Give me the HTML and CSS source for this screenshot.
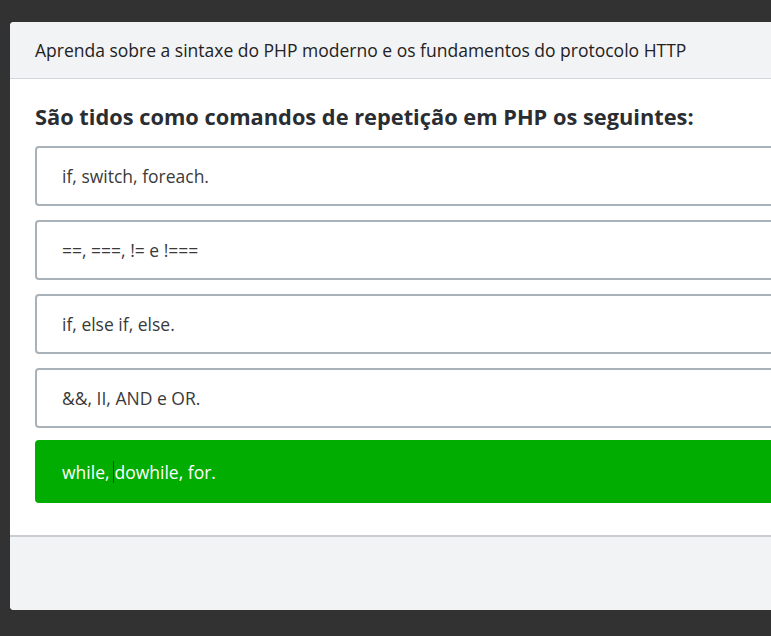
FILE: index.html
```html
<!DOCTYPE html>
<html lang="pt">
<head>
<meta charset="utf-8">
<link rel="stylesheet" href="styles.css">
</head>
<body>
<div class="card">
  <div class="card-header">Aprenda sobre a sintaxe do PHP moderno e os fundamentos do protocolo HTTP</div>
  <div class="card-body">
    <h2 class="question">São tidos como comandos de repetição em PHP os seguintes:</h2>
    <ul class="options">
      <li class="option">if, switch, foreach.</li>
      <li class="option">==, ===, != e !===</li>
      <li class="option">if, else if, else.</li>
      <li class="option">&amp;&amp;, II, AND e OR.</li>
      <li class="option correct">while, <span class="caret"></span>dowhile, for.</li>
    </ul>
  </div>
  <div class="card-footer"></div>
</div>
</body>
</html>
```
FILE: styles.css
```css
html, body {
  margin: 0;
  padding: 0;
  background: #323232;
  overflow: hidden;
  height: 636px;
}
body {
  font-family: "Open Sans", "Noto Sans", sans-serif;
  color: #333;
  padding: 22px 0 0 10px;
}
.card {
  width: 820px;
  background: #fff;
  border-radius: 4px;
  overflow: hidden;
}
.card-header {
  background: #f2f3f5;
  height: 57px;
  box-sizing: border-box;
  border-bottom: 1px solid #d3d7db;
  display: flex;
  align-items: center;
  padding-left: 25px;
  font-size: 17.5px;
  color: #222;
}
.card-body {
  padding: 23px 25px 32px;
}
.question {
  margin: 0 0 14px;
  font-size: 21.8px;
  font-weight: 700;
  color: #2a2d31;
  line-height: 30px;
}
.options {
  list-style: none;
  margin: 0;
  padding: 0;
  display: flex;
  flex-direction: column;
  gap: 14px;
}
.option {
  height: 60px;
  box-sizing: border-box;
  border: 2px solid #a9b1b9;
  border-radius: 4px;
  display: flex;
  align-items: center;
  padding-left: 25px;
  font-size: 17.5px;
  color: #3a3a3a;
}
.option.correct {
  margin-top: -2px;
  height: 63px;
  background: #00ad00;
  border-color: #00ad00;
  color: #fff;
}
.caret {
  display: inline-block;
  width: 1px;
  height: 22px;
  background: #1f3a1f;
  margin-left: 4px;
  vertical-align: middle;
}
.card-footer {
  height: 73px;
  background: #f2f3f5;
  border-top: 2px solid #c9cdd1;
}
```
